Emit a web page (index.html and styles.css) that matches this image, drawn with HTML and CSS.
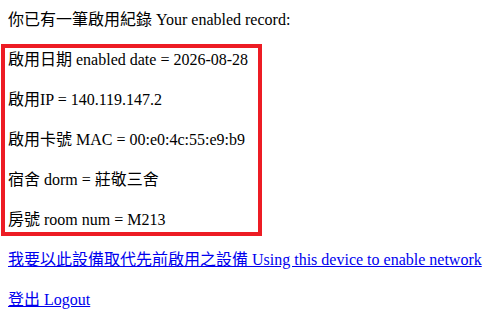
FILE: index.html
```html
<!DOCTYPE html>
<html lang="zh-Hant">
<head>
<meta charset="utf-8">
<title>Record</title>
<link rel="stylesheet" href="styles.css">
</head>
<body>
<div class="page">
  <div class="line heading">你已有一筆啟用紀錄 Your enabled record:</div>
  <div class="record">
    <div class="row">啟用日期 enabled date = 2026-08-28</div>
    <div class="row">啟用IP = 140.119.147.2</div>
    <div class="row">啟用卡號 MAC = 00:e0:4c:55:e9:b9</div>
    <div class="row">宿舍 dorm = 莊敬三舍</div>
    <div class="row">房號 room num = M213</div>
  </div>
  <div class="line link-line"><a href="#">我要以此設備取代先前啟用之設備 Using this device to enable network</a></div>
  <div class="line logout-line"><a href="#">登出 Logout</a></div>
</div>
</body>
</html>
```

FILE: styles.css
```css
html, body {
  margin: 0;
  padding: 0;
  background: #ffffff;
}
body {
  font-family: "Liberation Serif", "Noto Sans CJK TC", serif;
  font-size: 16px;
  line-height: 24px;
  color: #000000;
}
.page {
  display: flex;
  flex-direction: column;
  align-items: flex-start;
  padding-top: 8px;
}
.line {
  padding-left: 8px;
  white-space: nowrap;
}
.heading {
  margin-bottom: 12px;
}
.record {
  box-sizing: border-box;
  width: 261px;
  margin-left: 1px;
  border: 4px solid #ed1c24;
  padding-left: 3px;
  display: flex;
  flex-direction: column;
  gap: 16px;
}
.row {
  white-space: nowrap;
}
.link-line {
  margin-top: 12px;
}
.logout-line {
  margin-top: 16px;
}
a {
  color: #0000ee;
  text-decoration: underline;
}
```
